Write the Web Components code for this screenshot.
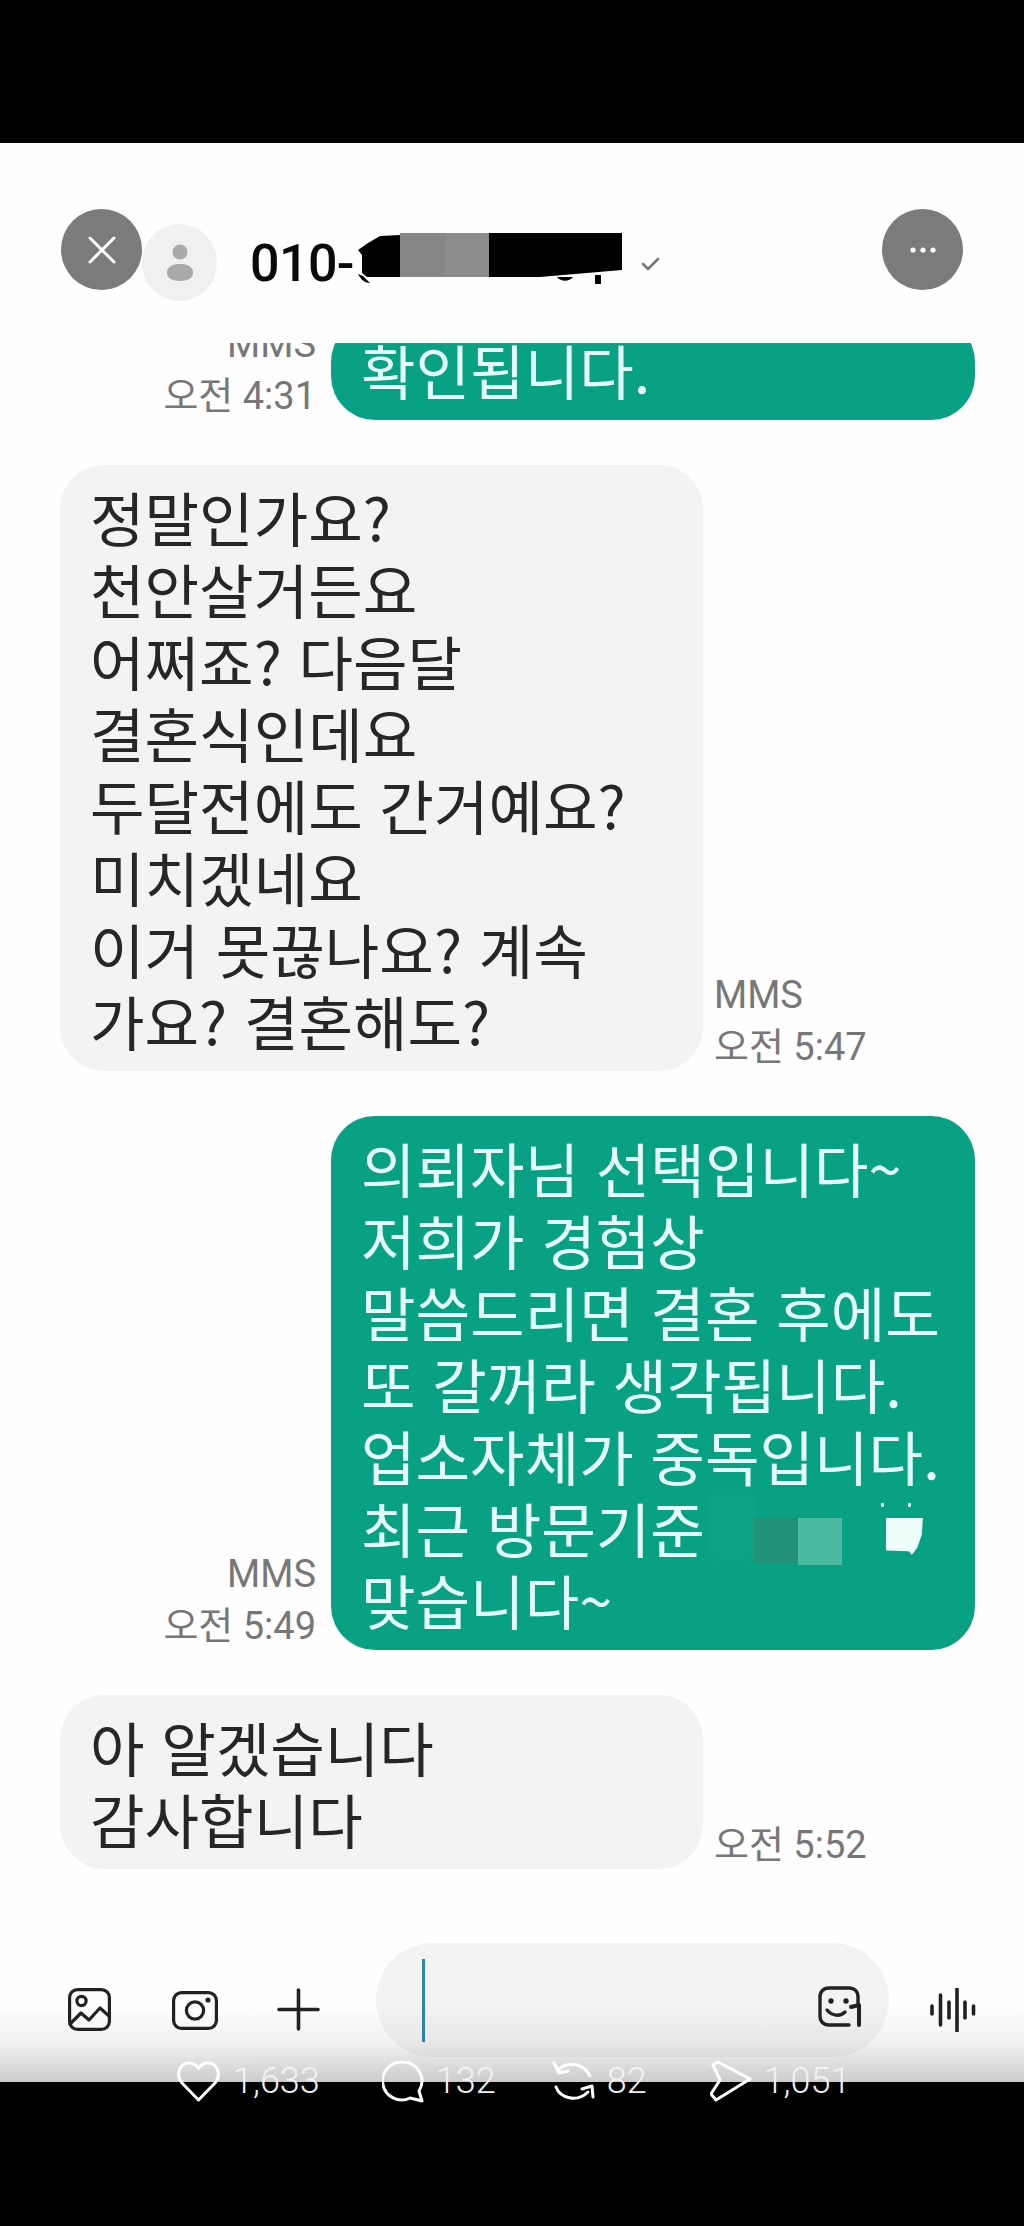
<!DOCTYPE html>
<html lang="ko">
<head>
<meta charset="utf-8">
<title>MMS</title>
<style>
  html, body { margin: 0; background: #000; }
</style>
</head>
<body>
<phone-frame>
  <chat-header slot="header" number="010-"></chat-header>
  <chat-list slot="list">
    <chat-row side="sent" mms time="오전 4:31">확인됩니다.</chat-row>
    <chat-row side="received" mms time="오전 5:47">정말인가요?<br>천안살거든요<br>어쩌죠? 다음달<br>결혼식인데요<br>두달전에도 간거예요?<br>미치겠네요<br>이거 못끊나요? 계속<br>가요? 결혼해도?</chat-row>
    <chat-row side="sent" mms time="오전 5:49">의뢰자님 선택입니다~<br>저희가 경험상<br>말씀드리면 결혼 후에도<br>또 갈꺼라 생각됩니다.<br>업소자체가 중독입니다.<br>최근 방문기준<mosaic-patch></mosaic-patch><br>맞습니다~</chat-row>
    <chat-row side="received" time="오전 5:52">아 알겠습니다<br>감사합니다</chat-row>
  </chat-list>
  <chat-composer slot="composer"></chat-composer>
  <post-stats slot="stats"></post-stats>
</phone-frame>

<script>
class PhoneFrame extends HTMLElement {
  constructor() {
    super();
    this.attachShadow({ mode: 'open' });
    this.shadowRoot.innerHTML = `
      <style>
        :host {
          display: flex;
          flex-direction: column;
          position: relative;
          height: 2226px;
          background: #000;
          overflow: hidden;
        }
        .screen {
          margin: 143px 0 144px;
          height: 1939px;
          background: #fefefe;
          display: flex;
          flex-direction: column;
        }
        .middle {
          flex: 1;
          min-height: 0;
          display: flex;
        }
      </style>
      <div class="screen">
        <slot name="header"></slot>
        <div class="middle"><slot name="list"></slot></div>
        <slot name="composer"></slot>
      </div>
      <slot name="stats"></slot>
    `;
  }
}

class ChatHeader extends HTMLElement {
  constructor() {
    super();
    this.attachShadow({ mode: 'open' });
    this.shadowRoot.innerHTML = `
      <style>
        :host {
          display: flex;
          align-items: flex-start;
          height: 200px;
          box-sizing: border-box;
          padding: 66px 61px 0;
          font-family: Roboto, "Noto Sans CJK KR", sans-serif;
        }
        .round {
          width: 81px;
          height: 81px;
          border-radius: 50%;
          background: #7b7b7b;
          flex-shrink: 0;
          display: flex;
        }
        .round svg { margin: auto; display: block; }
        .avatar {
          width: 75px;
          height: 77px;
          margin-top: 15px;
          border-radius: 50%;
          background: #f0f0f0;
          flex-shrink: 0;
          display: flex;
        }
        .avatar svg { margin: auto; display: block; }
        .name {
          position: relative;
          margin: 25px 0 0 33px;
          width: 372px;
          font-size: 52px;
          line-height: 60px;
          font-weight: 500;
          color: #0a0a0a;
          letter-spacing: -0.6px;
        }
        .name svg { position: absolute; left: 1px; top: -1px; }
        .check { margin: 48px 0 0 19px; display: block; }
        .more { margin-left: auto; }
      </style>
      <div class="round">
        <svg width="28" height="28" viewBox="0 0 28 28" fill="none" stroke="#fff" stroke-width="3" stroke-linecap="round"><path d="M2 2 26 26M26 2 2 26"/></svg>
      </div>
      <div class="avatar">
        <svg width="28" height="38" viewBox="0 0 28 38" fill="#a9a9a9"><circle cx="14" cy="8" r="7.5"/><path d="M1 29C1 22 7 20 14 20s13 2 13 9c0 5-5 8-13 8S1 34 1 29Z"/></svg>
      </div>
      <div class="name">
        <span class="number"></span>
        <svg width="372" height="52" viewBox="0 0 372 52">
          <path d="M149 2 129 3 117 10 107 17 111 22V40L116 44H149Z" fill="#000"/>
          <path d="M107 41C110 47 114 50 119 50L112 43Z" fill="#000"/>
          <rect x="149" y="0" width="45" height="44" fill="#868686"/>
          <rect x="194" y="0" width="44" height="44" fill="#8c8c8c"/>
          <path d="M238 0H371V37L289 44H238Z" fill="#000"/>
          <path d="M306 44H322C318 49 310 49 306 44ZM344 42H350V51H344Z" fill="#000"/>
        </svg>
      </div>
      <svg class="check" width="19" height="14" viewBox="0 0 19 14" fill="none" stroke="#777" stroke-width="2.6" stroke-linecap="round" stroke-linejoin="round"><path d="M2 7l5 5L17 2"/></svg>
      <div class="round more">
        <svg width="30" height="8" viewBox="0 0 30 8" fill="#fff"><circle cx="5" cy="4" r="2.6"/><circle cx="15" cy="4" r="2.6"/><circle cx="25" cy="4" r="2.6"/></svg>
      </div>
    `;
    this.shadowRoot.querySelector('.number').textContent = this.getAttribute('number');
  }
}

class ChatList extends HTMLElement {
  constructor() {
    super();
    this.attachShadow({ mode: 'open' });
    this.shadowRoot.innerHTML = `
      <style>
        :host {
          flex: 1;
          min-width: 0;
          display: flex;
          flex-direction: column;
          justify-content: flex-end;
          gap: 45px;
          padding-bottom: 74px;
          overflow: hidden;
        }
      </style>
      <slot></slot>
    `;
  }
}

class ChatRow extends HTMLElement {
  constructor() {
    super();
    this.attachShadow({ mode: 'open' });
    this.shadowRoot.innerHTML = `
      <style>
        :host {
          display: flex;
          flex-shrink: 0;
          align-items: flex-end;
          font-family: "Noto Sans CJK KR", sans-serif;
        }
        :host([side="sent"]) {
          flex-direction: row-reverse;
          padding-right: 49px;
          gap: 15px;
        }
        :host([side="received"]) {
          padding-left: 60px;
          gap: 11px;
        }
        .bubble {
          width: 643px;
          box-sizing: border-box;
          padding: 15px 20px 15px 30px;
          border-radius: 44px;
          font-size: 59.3px;
          line-height: 72px;
          white-space: nowrap;
          background: #f3f3f3;
          color: #262626;
        }
        :host([side="sent"]) .bubble {
          width: 644px;
          background: #09a184;
          color: #e6fffb;
        }
        .meta {
          font-family: Roboto, "Noto Sans CJK KR", sans-serif;
          font-size: 38px;
          line-height: 52px;
          margin-bottom: -2px;
          color: #777;
          white-space: nowrap;
        }
        :host([side="sent"]) .meta { text-align: right; }
        .mms { display: none; }
        :host([mms]) .mms { display: block; }
      </style>
      <div class="bubble"><slot></slot></div>
      <div class="meta">
        <div class="mms">MMS</div>
        <div class="time"></div>
      </div>
    `;
    this.shadowRoot.querySelector('.time').textContent = this.getAttribute('time');
  }
}

class MosaicPatch extends HTMLElement {
  constructor() {
    super();
    this.attachShadow({ mode: 'open' });
    this.shadowRoot.innerHTML = `
      <style>
        :host {
          display: inline-block;
          position: relative;
          width: 216px;
          height: 0;
        }
        div { position: absolute; }
        .a { left: 5px; top: -57px; width: 44px; height: 62px; background: #0da488; filter: blur(3px); }
        .b { left: 49px; top: -35px; width: 44px; height: 45px; background: #239078; }
        .c { left: 93px; top: -35px; width: 44px; height: 47px; background: #4bb9a0; }
        .d {
          left: 181px;
          top: -35px;
          width: 37px;
          height: 37px;
          background: #effdfb;
          clip-path: polygon(0 0, 100% 0, 97% 45%, 85% 80%, 70% 100%, 62% 90%, 0 88%);
        }
        .speck { width: 3px; height: 4px; background: #cfeee8; top: -50px; }
      </style>
      <div class="a"></div><div class="b"></div><div class="c"></div><div class="d"></div>
      <div class="speck" style="left:176px"></div><div class="speck" style="left:203px"></div>
    `;
  }
}

class ChatComposer extends HTMLElement {
  constructor() {
    super();
    this.attachShadow({ mode: 'open' });
    this.shadowRoot.innerHTML = `
      <style>
        :host {
          display: flex;
          align-items: flex-start;
          position: relative;
          height: 139px;
          box-sizing: border-box;
          padding-left: 68px;
        }
        :host::after {
          content: "";
          position: absolute;
          left: 0;
          right: 0;
          top: 62px;
          bottom: 0;
          background: linear-gradient(rgba(0,0,0,0), rgba(0,0,0,.05) 50%, rgba(0,0,0,.2));
        }
        svg { display: block; flex-shrink: 0; }
        .image { margin-top: 45px; }
        .camera { margin: 48px 0 0 61px; }
        .plus { margin: 45px 0 0 59px; }
        .pill {
          margin-left: 56px;
          width: 513px;
          height: 114px;
          border-radius: 57px;
          background: #f3f3f3;
          flex-shrink: 0;
          box-sizing: border-box;
          padding: 16px 27px 0 46px;
          display: flex;
          align-items: flex-start;
        }
        .caret { width: 2.5px; height: 83px; background: #2a86b8; }
        .emoji { margin: 27px 0 0 auto; }
        .wave { margin: 45px 0 0 41px; }
      </style>
      <svg class="image" width="43" height="43" viewBox="0 0 43 43" fill="none" stroke="#222" stroke-width="3.2" stroke-linecap="round" stroke-linejoin="round">
        <rect x="1.6" y="1.6" width="39.8" height="39.8" rx="8"/>
        <circle cx="13.5" cy="13" r="4.6"/>
        <path d="M2 36 13 25 21 32 32 20 41 28"/>
      </svg>
      <svg class="camera" width="46" height="39" viewBox="0 0 46 39" fill="none" stroke="#222" stroke-width="3.2">
        <rect x="1.6" y="1.6" width="42.8" height="35.8" rx="8"/>
        <circle cx="23" cy="19.5" r="8.6"/>
        <circle cx="36" cy="9" r="2.6" fill="#222" stroke="none"/>
      </svg>
      <svg class="plus" width="43" height="43" viewBox="0 0 43 43" fill="none" stroke="#222" stroke-width="3.6" stroke-linecap="round"><path d="M21.5 2V41M2 21.5H41"/></svg>
      <div class="pill">
        <div class="caret"></div>
        <svg class="emoji" width="44" height="42" viewBox="0 0 44 42" fill="none" stroke="#222" stroke-width="3.4" stroke-linecap="round" stroke-linejoin="round">
          <path d="M31 39H11C5.500 39 2 35.500 2 30V11C2 5.500 5.500 2 11 2H31C36.500 2 40 5.500 40 11V19"/>
          <path d="M9 24C14 30 22 31 27 26"/>
          <path d="M33 21 41 19V39" stroke-width="4"/>
          <circle cx="13" cy="15" r="2.7" fill="#222" stroke="none"/>
          <circle cx="28" cy="15" r="2.7" fill="#222" stroke="none"/>
        </svg>
      </div>
      <svg class="wave" width="46" height="44" viewBox="0 0 46 44" fill="none" stroke="#222" stroke-width="3.6" stroke-linecap="round">
        <path d="M2 18V26M10.500 7V37M19 14V30M27 1V43M35 14V30M43.500 18V26"/>
      </svg>
    `;
  }
}

class PostStats extends HTMLElement {
  constructor() {
    super();
    this.attachShadow({ mode: 'open' });
    this.shadowRoot.innerHTML = `
      <style>
        :host {
          position: absolute;
          left: 176px;
          top: 2059px;
          display: flex;
          align-items: center;
          font-family: Roboto, sans-serif;
          font-weight: 300;
          font-size: 36px;
          color: #f2f2f2;
        }
        .item { display: flex; align-items: center; gap: 12px; }
        .comment { margin-left: 62px; }
        .repost { margin-left: 55px; }
        .send { margin-left: 63px; }
        svg { display: block; }
      </style>
      <div class="item">
        <svg width="45" height="44" viewBox="0 0 45 44" fill="none" stroke="#fff" stroke-width="3" stroke-linejoin="round"><path d="M22.500 41 6 24C-1 15 4 4 13 4 17 4 20.500 6 22.500 9.500 24.500 6 28 4 32 4 41 4 46 15 39 24Z"/></svg>
        <span>1,633</span>
      </div>
      <div class="item comment">
        <svg width="42" height="44" viewBox="0 0 42 44" fill="none" stroke="#fff" stroke-width="3" stroke-linejoin="round"><path d="M21 3A19 19 0 0 1 37 32L40 42 28 39A19 19 0 1 1 21 3Z"/></svg>
        <span>132</span>
      </div>
      <div class="item repost">
        <svg width="44" height="44" viewBox="0 0 44 44" fill="none" stroke="#fff" stroke-width="3" stroke-linecap="round" stroke-linejoin="round"><path d="M39 17C34 6 20 1 8 10M3 4 8 14 17 12M5 28C9 39 26 44 37 33M42 38 41 27 31 30"/></svg>
        <span>82</span>
      </div>
      <div class="item send">
        <svg width="42" height="44" viewBox="0 0 42 44" fill="none" stroke="#fff" stroke-width="3" stroke-linejoin="round"><path d="M3 6 8 3 40 20 6 41 1 35 10 21Z"/></svg>
        <span>1,051</span>
      </div>
    `;
  }
}

customElements.define('phone-frame', PhoneFrame);
customElements.define('chat-header', ChatHeader);
customElements.define('chat-list', ChatList);
customElements.define('chat-row', ChatRow);
customElements.define('mosaic-patch', MosaicPatch);
customElements.define('chat-composer', ChatComposer);
customElements.define('post-stats', PostStats);
</script>
</body>
</html>
